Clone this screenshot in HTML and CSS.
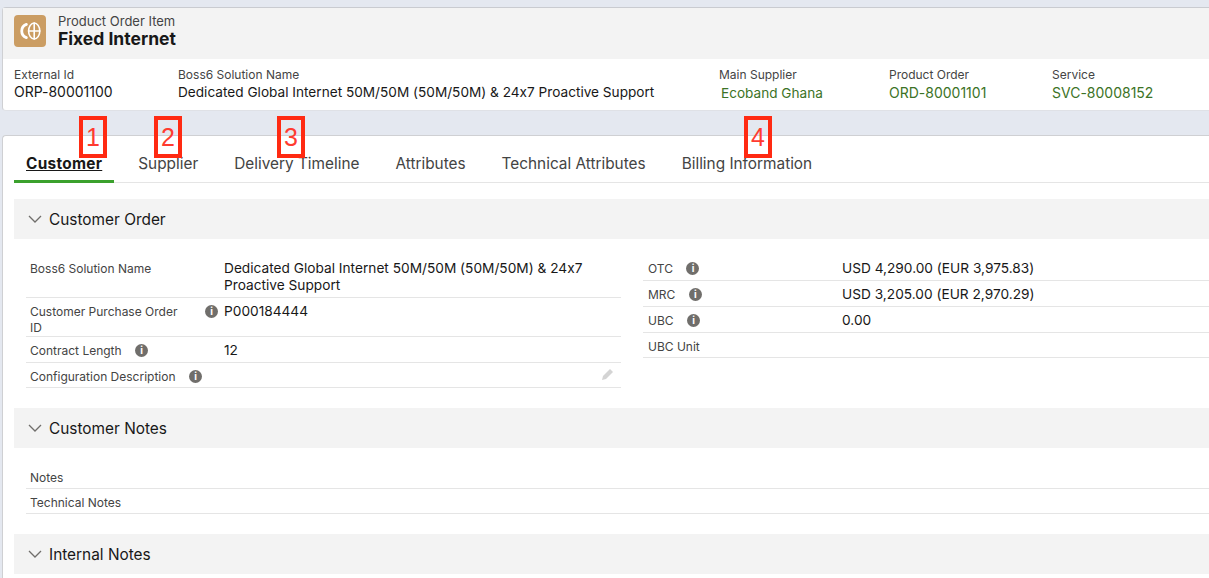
FILE: index.html
```html
<!DOCTYPE html>
<html lang="en">
<head>
<meta charset="utf-8">
<title>Fixed Internet</title>
<link rel="stylesheet" href="styles.css">
</head>
<body>
<div class="page">
  <header class="card highlights">
    <div class="title-bar">
      <div class="record-icon">
        <svg width="24" height="24" viewBox="0 0 24 24" fill="none" stroke="#fff" stroke-linecap="round">
          <path d="M8.4 5.4a7 7 0 0 0 0 13.2" stroke-width="2.8"/>
          <ellipse cx="16.2" cy="12" rx="5.6" ry="8" stroke-width="1.6"/>
          <path d="M16.2 4v16M10.6 12h11.2" stroke-width="1.6"/>
        </svg>
      </div>
      <div class="title-text">
        <div class="object-name">Product Order Item</div>
        <div class="record-name">Fixed Internet</div>
      </div>
    </div>
    <div class="fields">
      <div class="field f1"><div class="field-label">External Id</div><div class="field-value num">ORP-80001100</div></div>
      <div class="field f2"><div class="field-label">Boss6 Solution Name</div><div class="field-value">Dedicated Global Internet 50M/50M (50M/50M) &amp; 24x7 Proactive Support</div></div>
      <div class="field f3"><div class="field-label">Main Supplier</div><div class="field-value link indent">Ecoband Ghana</div></div>
      <div class="field f4"><div class="field-label">Product Order</div><div class="field-value link num">ORD-80001101</div></div>
      <div class="field f5"><div class="field-label">Service</div><div class="field-value link num">SVC-80008152</div></div>
    </div>
  </header>

  <main class="card content">
    <nav class="tabs">
      <span class="tab active">Customer</span>
      <span class="tab">Supplier</span>
      <span class="tab">Delivery Timeline</span>
      <span class="tab">Attributes</span>
      <span class="tab">Technical Attributes</span>
      <span class="tab">Billing Information</span>
    </nav>

    <section class="section first">
      <h2 class="section-head"><svg class="chev" width="14" height="8" viewBox="0 0 14 8"><path d="M1 1l6 6 6-6" fill="none" stroke="#706e6b" stroke-width="1.3"/></svg>Customer Order</h2>
      <div class="order-grid">
        <div class="col-left">
          <div class="row r-name"><div class="lbl wide">Boss6 Solution Name</div><div class="val">Dedicated Global Internet 50M/50M (50M/50M) &amp; 24x7<br>Proactive Support</div></div>
          <div class="row r-po"><div class="lbl wide"><span class="po-text">Customer Purchase Order ID</span><span class="info push">i</span></div><div class="val">P000184444</div></div>
          <div class="row r-one"><div class="lbl wide">Contract Length<span class="info">i</span></div><div class="val">12</div></div>
          <div class="row r-last"><div class="lbl wide">Configuration Description<span class="info">i</span></div><div class="val"></div>
            <svg class="pencil" width="14" height="14" viewBox="0 0 14 14"><path d="M1 13l1-4 7-7 3 3-7 7z" fill="#d4d4d4"/></svg>
          </div>
        </div>
        <div class="col-right">
          <div class="row r-right"><div class="lbl narrow">OTC<span class="info">i</span></div><div class="val">USD 4,290.00 (EUR 3,975.83)</div></div>
          <div class="row r-right"><div class="lbl narrow">MRC<span class="info">i</span></div><div class="val">USD 3,205.00 (EUR 2,970.29)</div></div>
          <div class="row r-right"><div class="lbl narrow">UBC<span class="info">i</span></div><div class="val">0.00</div></div>
          <div class="row r-right r-end"><div class="lbl narrow">UBC Unit</div><div class="val"></div></div>
        </div>
      </div>
    </section>

    <section class="section">
      <h2 class="section-head"><svg class="chev" width="14" height="8" viewBox="0 0 14 8"><path d="M1 1l6 6 6-6" fill="none" stroke="#706e6b" stroke-width="1.3"/></svg>Customer Notes</h2>
      <div class="notes">
        <div class="row r-note"><div class="lbl">Notes</div></div>
        <div class="row r-note"><div class="lbl">Technical Notes</div></div>
      </div>
    </section>

    <section class="section">
      <h2 class="section-head"><svg class="chev" width="14" height="8" viewBox="0 0 14 8"><path d="M1 1l6 6 6-6" fill="none" stroke="#706e6b" stroke-width="1.3"/></svg>Internal Notes</h2>
    </section>
  </main>
</div>

<div class="marker m1">1</div>
<div class="marker m2">2</div>
<div class="marker m3">3</div>
<div class="marker m4">4</div>
</body>
</html>
```

FILE: styles.css
```css
* { box-sizing: border-box; }
html, body { height: 100%; }
body {
  margin: 0;
  overflow: hidden;
  background: #e4e8f0;
  font-family: Inter, "Liberation Sans", sans-serif;
  font-feature-settings: "calt" 0;
  color: #181818;
}
.page {
  width: 1240px;
  padding: 7px 0 0 2px;
  display: flex;
  flex-direction: column;
  gap: 24px;
}
.card {
  background: #fff;
  border: 1px solid #cfd0d3;
  border-right: 0;
  border-radius: 4px 0 0 4px;
}
.highlights { height: 104px; border-top-color: #c9cbd0; border-bottom-color: #dfe1e6; }
.title-bar {
  height: 51px;
  background: #f3f3f3;
  display: flex;
  align-items: flex-start;
  gap: 12px;
  padding: 7px 0 0 11px;
}
.record-icon {
  width: 32px;
  height: 32px;
  border-radius: 4px;
  background: #cb9d63;
  display: flex;
  align-items: center;
  justify-content: center;
}
.title-text { margin-top: -2px; }
.object-name { font-size: 13px; line-height: 16px; color: #444; }
.record-name { font-size: 17.5px; line-height: 20px; font-weight: 700; color: #181818; }
.fields { display: flex; padding: 8px 0 0 11px; }
.field-label { font-size: 12px; line-height: 16px; color: #444; }
.field-value { font-size: 13.64px; line-height: 18px; color: #181818; white-space: nowrap; }
.field-value.link { color: #3c7326; margin-top: 1px; }
.field-value.num { font-size: 14px; }
.field-value.indent { padding-left: 2px; font-size: 13.6px; }
.f1 { width: 164px; }
.f2 { width: 541px; }
.f3 { width: 170px; }
.f4 { width: 163px; }
.f5 { width: 150px; }

.content { height: 460px; padding: 0 0 0 11px; }
.tabs {
  height: 47px;
  display: flex;
  gap: 12px;
  border-bottom: 1px solid #e5e5e5;
}
.tab {
  padding: 17px 12px 0;
  font-size: 15.36px;
  line-height: 22px;
  color: #444;
  margin-bottom: -1px;
}
.tab.active {
  font-weight: 700;
  letter-spacing: 0.3px;
  color: #181818;
  text-decoration: underline;
  border-bottom: 3px solid #3ba12d;
}
.section { margin-top: 20px; }
.section.first { margin-top: 16px; }
.section-head {
  margin: 0;
  height: 40px;
  background: #f3f3f3;
  display: flex;
  align-items: center;
  gap: 7px;
  padding-left: 14px;
  font-size: 15.4px;
  font-weight: 400;
  color: #181818;
}
.chev { flex: none; }
.order-grid {
  display: flex;
  padding: 16px 0 0 12px;
  gap: 22px;
  height: 149px;
}
.col-left { width: 595px; padding-top: 4px; }
.col-right { flex: 1; }
.row {
  display: flex;
  position: relative;
  border-bottom: 1px solid #e5e5e5;
}
.lbl {
  font-size: 12px;
  line-height: 16px;
  color: #444;
  padding: 1px 0 0 4px;
  display: flex;
  align-items: flex-start;
}
.lbl.wide { width: 198px; flex: none; }
.lbl.narrow { width: 199px; flex: none; padding-left: 5px; }
.val { font-size: 13.7px; line-height: 17px; color: #181818; }
.po-text { width: 150px; }
.info {
  flex: none;
  width: 13px;
  height: 13px;
  margin: 1px 0 0 13.5px;
  border-radius: 50%;
  background: #706e6b;
  color: #fff;
  font-size: 10px;
  line-height: 13px;
  font-weight: 700;
  text-align: center;
}
.info.push { margin-left: 25px; }
.r-name { height: 39px; padding-top: 1px; }
.r-po { height: 39px; padding-top: 5px; }
.r-one { height: 26px; padding-top: 5px; }
.r-last { height: 25px; padding-top: 5px; }
.r-right { height: 26px; padding-top: 5px; }
.r-right.r-end { height: 25px; }
.pencil { position: absolute; right: 6px; top: 4px; }
.notes { padding: 20px 0 0 12px; height: 66px; }
.r-note { height: 21px; padding-top: 1px; }
.r-note + .r-note { height: 25px; padding-top: 5px; }

.marker {
  position: absolute;
  height: 42px;
  top: 116px;
  border: 4px solid #ff2a12;
  color: #ff3b30;
  background: transparent;
  font-family: "Liberation Sans", sans-serif;
  font-size: 25px;
  line-height: 35px;
  text-align: center;
}
.m1 { left: 79px; width: 28px; }
.m2 { left: 154px; width: 28px; }
.m3 { left: 277px; width: 28px; }
.m4 { left: 744px; width: 28px; }
```
